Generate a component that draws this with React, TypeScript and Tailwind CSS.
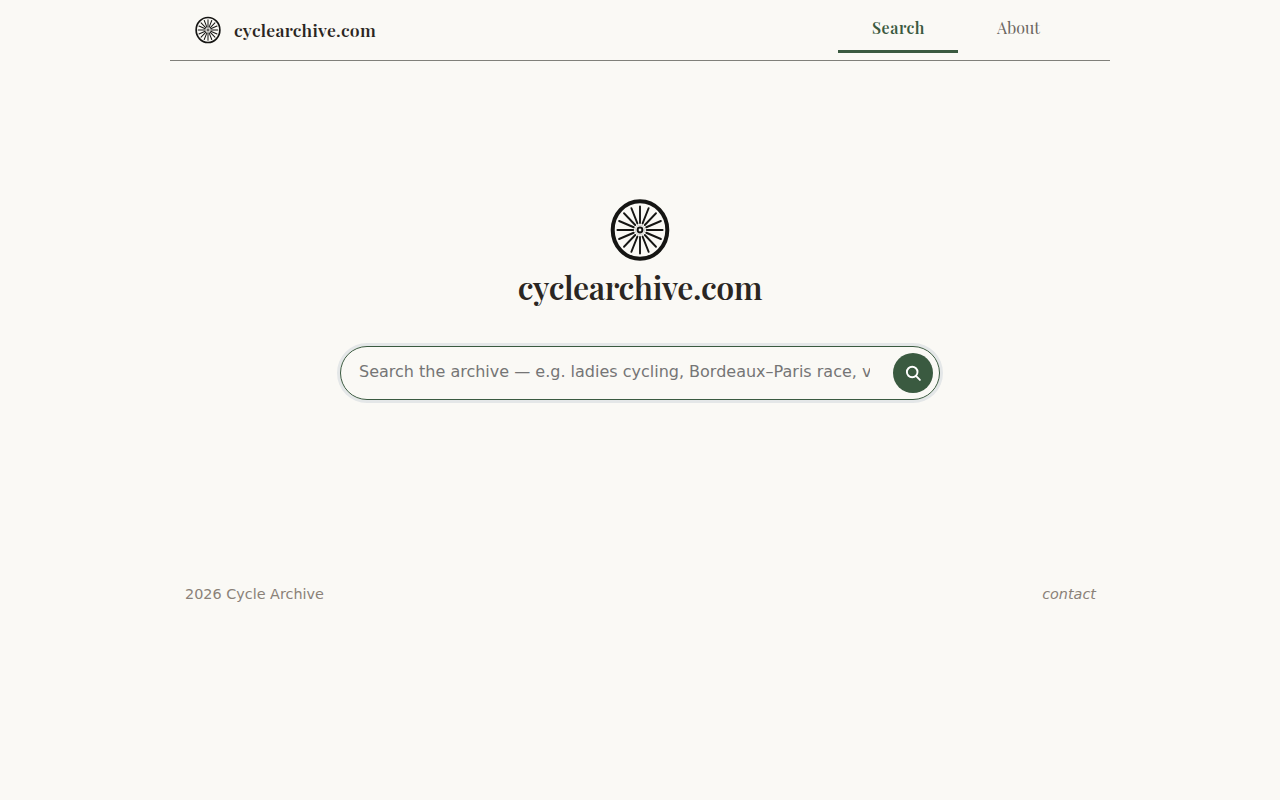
interface WheelProps {
  className?: string
  rim?: number
  spoke?: number
}

const SPOKE_ANGLES = Array.from({ length: 16 }).map((_, index) => index * 22.5)

const Wheel = ({ className = '', rim = 4, spoke = 1.9 }: WheelProps) => (
  <svg viewBox="0 0 60 64" className={className} fill="none" stroke="#151513" aria-hidden="true">
    <ellipse cx="30" cy="32" rx={29.3 - rim / 2} ry={30.8 - rim / 2} strokeWidth={rim} />
    <g transform="translate(30 32) scale(1 1.045)" strokeWidth={spoke} strokeLinecap="round">
      {SPOKE_ANGLES.map((angle) => (
        <line key={angle} x1="6.8" y1="0" x2="22.6" y2="0" transform={`rotate(${angle})`} />
      ))}
    </g>
    <circle cx="30" cy="32" r="4.9" strokeWidth="0.5" stroke="#a0a09c" />
    <circle cx="30" cy="32" r="2.4" strokeWidth="2" />
  </svg>
)

const Header = () => (
  <header className="flex h-[61px] items-start justify-between border-b border-[#80807a] pl-[25px] pr-8">
    <a href="#" className="flex h-[60px] items-center gap-[13px] text-[#2a2622]">
      <Wheel className="h-7 w-[26px]" rim={3.8} spoke={2.3} />
      <span className="font-[Playfair_Display,Liberation_Serif,serif] text-[17.6px] font-semibold leading-6 tracking-[0.25px]">
        cyclearchive.com
      </span>
    </a>
    <nav className="flex font-[Playfair_Display,Liberation_Serif,serif] text-base leading-6">
      <a
        href="#"
        className="flex h-[53px] w-[120px] justify-center border-b-3 border-[#3a5a40] pl-px pt-4 font-semibold tracking-[0.5px] text-[#3a5a40]"
      >
        Search
      </a>
      <a href="#" className="flex h-[53px] w-[120px] justify-center pl-px pt-4 text-[#6b6661]">
        About
      </a>
    </nav>
  </header>
)

const SearchBox = () => (
  <form className="flex h-[54px] w-[600px] items-center justify-between rounded-full border border-[#3a5a40] pl-[18px] pr-1.5 shadow-[0_0_0_3px_#e4e7e8]">
    <input
      type="text"
      placeholder="Search the archive — e.g. ladies cycling, Bordeaux–Paris race, velodrome"
      className="mb-[3px] h-8 w-[511px] bg-transparent text-base outline-none placeholder:text-[#757575]"
    />
    <button
      type="button"
      aria-label="Search"
      className="flex h-10 w-10 items-center justify-center rounded-full bg-[#3a5a40] text-white"
    >
      <svg width="18" height="18" viewBox="0 0 18 18" fill="none" stroke="currentColor" strokeWidth="1.9" strokeLinecap="round">
        <circle cx="8.2" cy="8" r="5.3" />
        <path d="M12.2 12.2 15.9 15.9" />
      </svg>
    </button>
  </form>
)

const Footer = () => (
  <footer className="flex justify-between pl-[15px] pr-3.5 text-[14.4px] leading-6 text-[#8a8178]">
    <span>2026 Cycle Archive</span>
    <a href="#" className="italic">
      contact
    </a>
  </footer>
)

export default function App() {
  return (
    <div className="min-h-screen bg-[#faf9f5] font-[DejaVu_Sans,sans-serif]">
      <div className="mx-auto w-[940px]">
        <Header />
        <main className="flex h-[521px] flex-col items-center pt-[137px]">
          <Wheel className="h-16 w-[60px]" />
          <h1 className="mt-[3px] font-[Playfair_Display,Liberation_Serif,serif] text-[32px] font-semibold leading-[44px] tracking-[-0.42px] text-[#2a2622]">
            cyclearchive.com
          </h1>
          <div className="mt-[37px]">
            <SearchBox />
          </div>
        </main>
        <Footer />
      </div>
    </div>
  )
}
